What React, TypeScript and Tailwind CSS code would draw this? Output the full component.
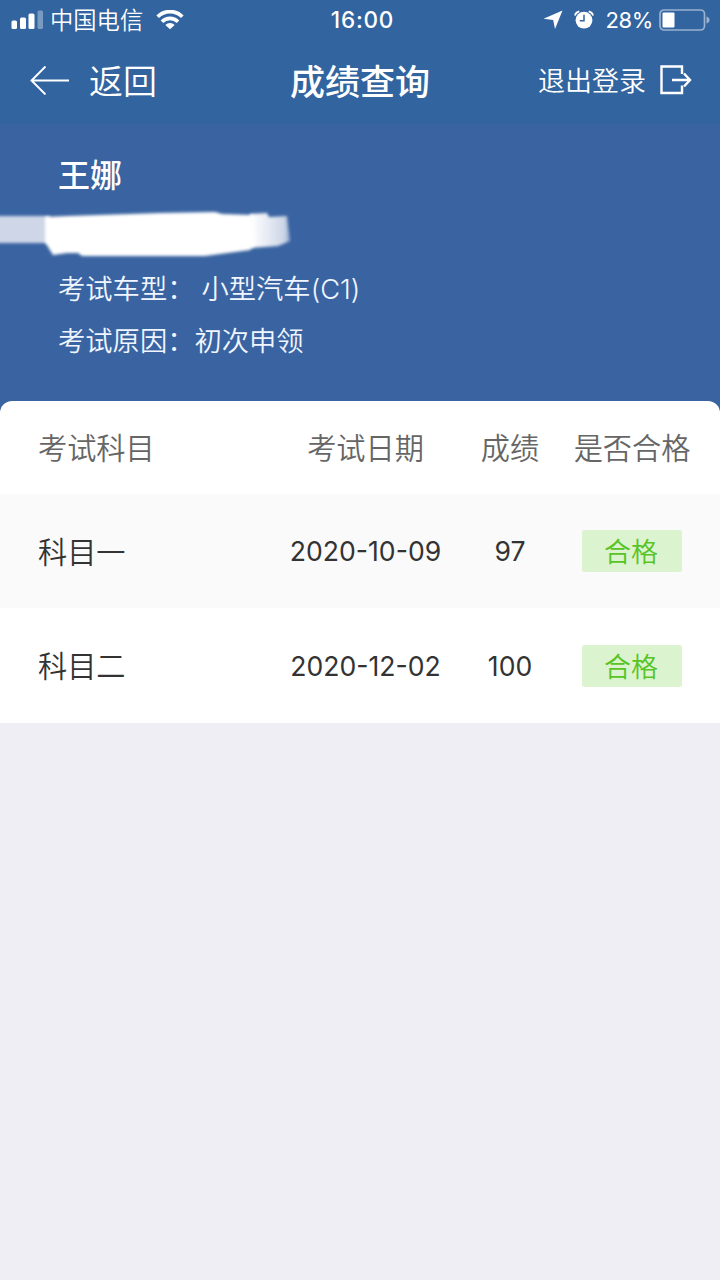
const results = [
  { subject: '科目一', date: '2020-10-09', score: 97, status: '合格' },
  { subject: '科目二', date: '2020-12-02', score: 100, status: '合格' },
];

function StatusBar() {
  return (
    <div className="h-10 flex items-center justify-between pl-[11px] pr-[10px]">
      <div className="flex items-center w-[320px]">
        <svg width="33" height="20" viewBox="0 0 33 20" fill="#fff">
          <rect x="0.5" y="10.5" width="5.5" height="8.5" rx="1.5" />
          <rect x="9" y="7.5" width="6" height="11.5" rx="1.5" />
          <rect x="17.5" y="3.5" width="6" height="15.5" rx="1.5" />
          <rect x="26.5" y="0.5" width="5.5" height="18.5" rx="1.5" opacity="0.35" />
        </svg>
        <span className="ml-[6px] pb-[1px] text-[23.3px] leading-none font-[350] whitespace-nowrap">中国电信</span>
        <svg className="ml-[13px]" width="28" height="20" viewBox="0 0 28 20">
          <g fill="none" stroke="#fff" strokeWidth="3.7">
            <path d="M1.7 6.7 A17.3 17.3 0 0 1 26.3 6.7" />
            <path d="M6 11.7 A11.2 11.2 0 0 1 22 11.7" />
          </g>
          <path d="M14 19.2 L9.3 15 A6.6 6.6 0 0 1 18.7 15 Z" fill="#fff" />
        </svg>
      </div>
      <span className="font-['Inter'] text-[22.5px] font-medium tracking-[0.8px]">16:00</span>
      <div className="flex items-center justify-end w-[316px]">
        <svg width="20" height="20" viewBox="0 0 20 20" fill="#fff">
          <path d="M19.5 0.5 L0.5 8.7 L10.2 10 L12 19 Z" />
        </svg>
        <svg className="ml-[11px]" width="20" height="20" viewBox="0 0 20 20">
          <circle cx="10" cy="10.2" r="8.4" fill="#fff" />
          <path d="M0.9 5.4 Q1.8 2.2 5.3 1.4 M19.1 5.4 Q18.2 2.2 14.7 1.4" fill="none" stroke="#fff" strokeWidth="1.7" />
          <path d="M10 4.8 V10.8 H5.8" fill="none" stroke="#3264a0" strokeWidth="1.5" />
        </svg>
        <span className="ml-[12px] font-['Inter'] text-[22px] tracking-[-0.4px]">28%</span>
        <svg className="ml-[6px]" width="51" height="22" viewBox="0 0 51 22">
          <rect x="1" y="1" width="44.5" height="20" rx="4" fill="none" stroke="#fff" strokeOpacity="0.5" strokeWidth="1.7" />
          <rect x="3.5" y="3.5" width="12" height="15" rx="1" fill="#fff" />
          <path d="M47.5 7.5 Q50.5 8.5 50.5 11 Q50.5 13.5 47.5 14.5 Z" fill="#fff" fillOpacity="0.5" />
        </svg>
      </div>
    </div>
  );
}

function NavBar() {
  return (
    <header className="h-[84px] pb-[4px] grid grid-cols-[240px_240px_240px] items-center">
      <button className="flex items-center pl-[30px]">
        <svg width="40" height="30" viewBox="0 0 40 30" fill="none" stroke="#fff" strokeWidth="1.9">
          <path d="M39 15.5 H2 M15.5 1.5 L1.5 15.5 L15.5 29.5" />
        </svg>
        <span className="ml-[19px] pb-[1px] text-[34px] leading-none font-[350] whitespace-nowrap">返回</span>
      </button>
      <h1 className="pb-[1px] text-center text-[35px] leading-none font-medium whitespace-nowrap">成绩查询</h1>
      <button className="flex items-center justify-end pr-[28px]">
        <span className="pb-[1px] text-[27px] leading-none font-[350] whitespace-nowrap">退出登录</span>
        <svg className="ml-[14px]" width="32" height="30" viewBox="0 0 32 30" fill="none" stroke="#fff" strokeWidth="2.4">
          <path d="M22 9 V1.5 H1.5 V28 H22 V20.5" />
          <path d="M12 15 H30 M24 8.5 L30 15 L24 21.5" />
        </svg>
      </button>
    </header>
  );
}

// brushed-out id number below the name
function RedactedLine() {
  return (
    <svg className="block" width="320" height="60" viewBox="0 0 320 60">
      <defs>
        <filter id="soft" x="-5%" y="-20%" width="110%" height="140%">
          <feGaussianBlur stdDeviation="1.5" />
        </filter>
        <linearGradient id="fade" x1="0" x2="1" y1="0" y2="0">
          <stop offset="0" stopColor="#fff" />
          <stop offset="0.35" stopColor="#eceff6" />
          <stop offset="0.85" stopColor="#ccd6e7" />
          <stop offset="1" stopColor="#8da5ca" />
        </linearGradient>
      </defs>
      <path d="M-6 9 H50 V36 H-6 Z" fill="#ced6e8" filter="url(#soft)" />
      <path d="M250 7 L267 6 L269 10 L287 9 L290 34 L278 39 L250 41 Z" fill="url(#fade)" filter="url(#soft)" />
      <path
        d="M45 10 L68 9 L130 7 L160 6 L215 5 L222 7 L253 8 L255 37 L250 43 L205 49 L160 49 L82 49 L78 46 L67 46 L53 48 L45 35 Z"
        fill="#fff"
        filter="url(#soft)"
      />
    </svg>
  );
}

function Candidate() {
  return (
    <section className="h-[277px] bg-[#3a64a1] pt-[31px]">
      <h2 className="pl-[58px] h-[52px] text-[32px] leading-[36px] font-medium">王娜</h2>
      <RedactedLine />
      <div className="pl-[58px] text-[27.3px] leading-[52px] -mt-[6px] font-[350] text-[#f0f6ff]">
        <p className="flex h-[52px] whitespace-nowrap">
          考试车型：<span className="ml-[7px]">小型汽车<span className="font-['Inter']">(C1)</span></span>
        </p>
        <p className="h-[52px] whitespace-nowrap">考试原因：初次申领</p>
      </div>
    </section>
  );
}

function ResultTable() {
  return (
    <div className="bg-[#3a64a1]">
      <div className="rounded-t-[12px] bg-white overflow-hidden text-[29.2px]">
        <div className="h-[92.6px] pl-[38px] pb-[1px] grid grid-cols-[237px_181px_108px_136px] items-center text-center text-[#666] font-[350]">
          <span className="text-left">考试科目</span>
          <span>考试日期</span>
          <span>成绩</span>
          <span>是否合格</span>
        </div>
        {results.map((row) => (
          <div
            key={row.subject}
            className="h-[114.8px] pl-[38px] grid grid-cols-[237px_181px_108px_136px] items-center text-center text-[#333] odd:bg-white even:bg-[#fafafa]"
          >
            <span className="pb-[1px] text-left font-[350]">{row.subject}</span>
            <span className="pt-[2px] font-['Inter'] text-[26.6px]">{row.date}</span>
            <span className="pt-[2px] font-['Inter'] text-[26.6px]">{row.score}</span>
            <span className="justify-self-center w-[100px] h-[42px] pr-[2px] rounded-[3px] bg-[#dcf3d0] text-[27px] leading-[41px] font-[350] text-[#58c424]">
              {row.status}
            </span>
          </div>
        ))}
      </div>
    </div>
  );
}

export default function App() {
  return (
    <div className="w-[720px] h-[1280px] overflow-hidden bg-[#efeef4] font-['Noto_Sans_CJK_SC',sans-serif]">
      <div className="bg-[#3264a0] text-white">
        <StatusBar />
        <NavBar />
        <Candidate />
      </div>
      <ResultTable />
    </div>
  );
}
